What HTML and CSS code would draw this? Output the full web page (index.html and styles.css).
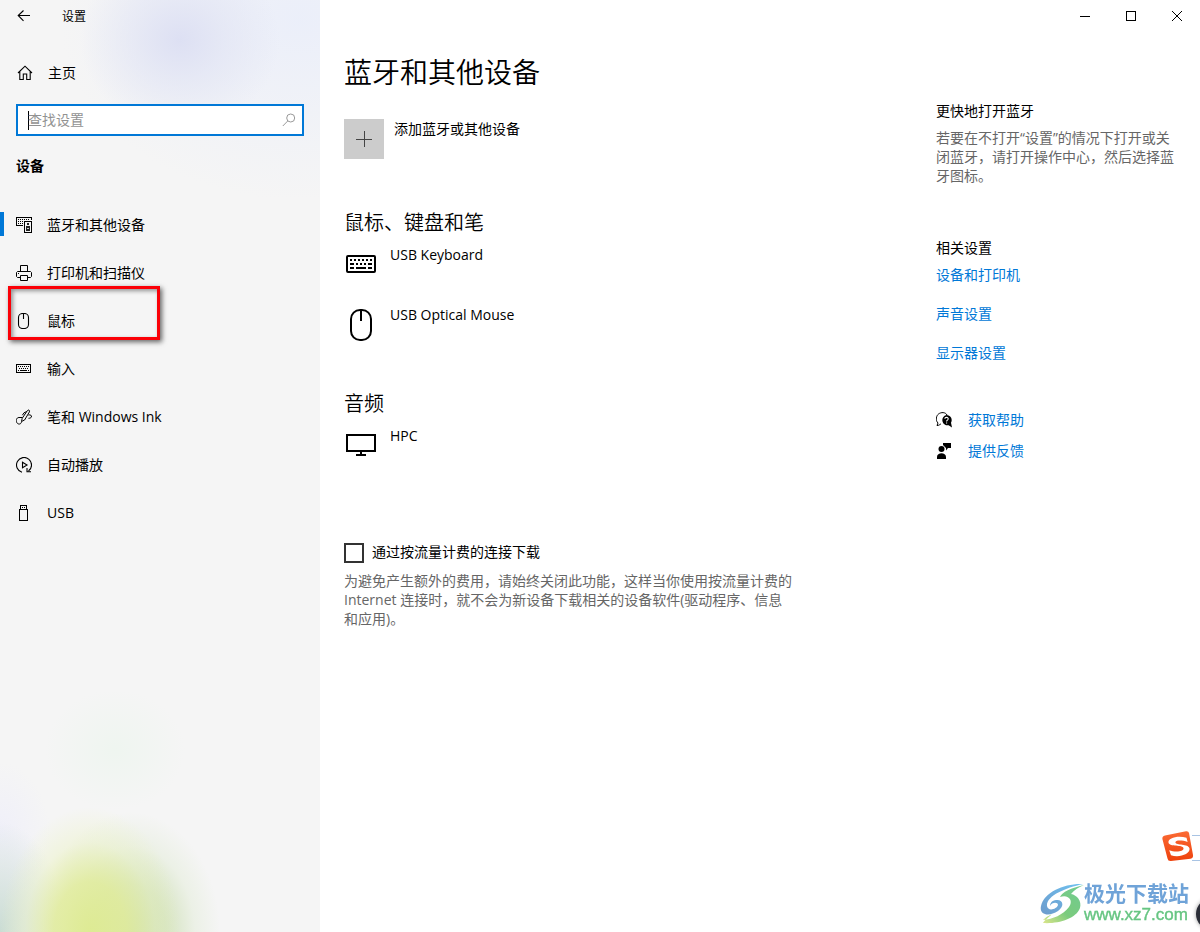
FILE: index.html
```html
<!DOCTYPE html>
<html lang="zh-CN">
<head>
<meta charset="utf-8">
<meta name="viewport" content="width=device-width, initial-scale=1">
<title>设置</title>
<link rel="stylesheet" href="styles.css">
</head>
<body>
<div class="window">
  <aside class="sidebar">
    <header class="app-bar">
      <button class="back" type="button" aria-label="返回">
        <svg width="14" height="12" viewBox="0 0 14 12" fill="none" stroke="#000" stroke-width="1.1"><path d="M1 5.5H13M6.5 .5L1.2 5.5L6.5 10.8"/></svg>
      </button>
      <span class="app-name">设置</span>
    </header>
    <a class="home" href="#home">
      <svg width="16" height="16" viewBox="0 0 16 16" fill="none" stroke="#000" stroke-width="1.1"><path d="M1 8L8 1.2L15 8M2.8 6.6V14.5H6.3V9H9.7V14.5H13.2V6.6"/></svg>
      <span>主页</span>
    </a>
    <div class="search">
      <span class="caret"></span>
      <input class="search-input" type="text" placeholder="查找设置" aria-label="查找设置">
      <svg width="14" height="14" viewBox="0 0 14 14" fill="none" stroke="#999" stroke-width="1"><circle cx="8.7" cy="5" r="4"/><path d="M5.8 7.9L.8 13"/></svg>
    </div>
    <h2 class="group-title">设备</h2>
    <nav class="nav">
      <a class="nav-item active" href="#bluetooth">
        <svg width="16" height="16" viewBox="0 0 16 16" fill="none" stroke="#000" shape-rendering="crispEdges"><path d="M7 8.500H.500V.500H15.500V3M8.500 4.500H15.500V15.500H8.500Z"/><path d="M2 2.500H14" stroke-dasharray="1 1"/><path d="M2 4.500H7M2 6.500H7" stroke-dasharray="1 1"/><path d="M11 6h2v2h-2zM10 9h4v5h-4z" fill="#222" stroke="none"/><path d="M11 11.500h2" stroke="#ccc"/></svg>
        <span>蓝牙和其他设备</span>
      </a>
      <a class="nav-item" href="#printers">
        <svg width="16" height="16" viewBox="0 0 16 16" fill="none" stroke="#000"><path d="M4.500 6.500V.500H11.500V6.500M4.500 12.500H1.500L.500 11.500V7.500L1.500 6.500H14.500L15.500 7.500V11.500L14.500 12.500H11.500M4.500 15.500V10.500H11.500V15.500Z"/><path d="M2 8.500h1"/></svg>
        <span>打印机和扫描仪</span>
      </a>
      <a class="nav-item" href="#mouse">
        <svg width="16" height="16" viewBox="0 0 16 16" fill="none" stroke="#000" stroke-width="1.1"><rect x="2.500" y=".500" width="10" height="15" rx="4"/><path d="M7.500 .500V6"/></svg>
        <span>鼠标</span>
        <i class="marker"></i>
      </a>
      <a class="nav-item" href="#typing">
        <svg width="16" height="16" viewBox="0 0 16 16" fill="none" stroke="#000" shape-rendering="crispEdges"><rect x=".500" y="3.500" width="14" height="8"/><path d="M2 5.500H14M3 7.500H13" stroke-dasharray="1 1"/><path d="M2 9.500h1M4 9.500h7M12 9.500h1"/></svg>
        <span>输入</span>
      </a>
      <a class="nav-item" href="#pen">
        <svg width="16" height="16" viewBox="0 0 16 16" fill="none" stroke="#000"><path d="M5.500 12.500L6.200 9.300L11.300 1.700C12.300 .200 14.200 1.300 13.400 2.900L8.600 11L5.500 12.500ZM10.700 2.500L8 3.800L6.400 6.200M6.300 8.500H3C.200 8.500-.200 12 .800 13.600C2.300 16 5.300 15.200 5.500 12.800M12.300 6C14.500 5.500 16 6.500 15.400 8C15 9 13.700 9.300 12.500 9.300"/></svg>
        <span>笔和 Windows Ink</span>
      </a>
      <a class="nav-item" href="#autoplay">
        <svg width="16" height="16" viewBox="0 0 16 16" fill="none" stroke="#000" stroke-width="1.1"><path d="M6 15.200A7.500 7.500 0 1 1 12.500 14M11 11V14.700H15"/><path d="M6.500 5.300V10.700L11 8Z"/></svg>
        <span>自动播放</span>
      </a>
      <a class="nav-item" href="#usb">
        <svg width="16" height="16" viewBox="0 0 16 16" fill="none" stroke="#000" shape-rendering="crispEdges"><path d="M4.500 4V.500H10.500V4M3.500 4.500H11.500V15.500H3.500Z"/><path d="M6 2.500h1M8 2.500h1"/></svg>
        <span>USB</span>
      </a>
    </nav>
  </aside>

  <div class="main">
    <div class="window-controls">
      <button type="button" aria-label="最小化"><svg width="10" height="10" viewBox="0 0 10 10" stroke="#000" fill="none"><path d="M0 5.500H10"/></svg></button>
      <button type="button" aria-label="最大化"><svg width="10" height="10" viewBox="0 0 10 10" stroke="#000" fill="none"><rect x=".500" y=".500" width="9" height="9"/></svg></button>
      <button type="button" aria-label="关闭"><svg width="10" height="10" viewBox="0 0 10 10" stroke="#000" fill="none"><path d="M0 0L10 10M10 0L0 10"/></svg></button>
    </div>
    <div class="content">
      <main class="settings">
        <h1 class="page-title">蓝牙和其他设备</h1>
        <button class="add" type="button">
          <span class="plus"><svg width="16" height="16" viewBox="0 0 16 16" stroke="#444" fill="none"><path d="M0 8.500H16M8.500 0V16"/></svg></span>
          <span>添加蓝牙或其他设备</span>
        </button>
        <section class="devices">
          <h2 class="section-title">鼠标、键盘和笔</h2>
          <div class="device">
            <svg width="32" height="38" viewBox="0 0 32 38" fill="none" stroke="#000" stroke-width="2"><rect x="2" y="11" width="28" height="16" rx="1"/><path d="M5 15H28" stroke-dasharray="2 2"/><path d="M5 19h4M11 19h2M15 19h2M19 19h2M23 19h4M5 23h4M11 23h10M23 23h4"/></svg>
            <span>USB Keyboard</span>
          </div>
          <div class="device">
            <svg width="32" height="38" viewBox="0 0 32 38" fill="none" stroke="#000" stroke-width="2"><rect x="6" y="5" width="20" height="30" rx="9"/><path d="M16 5V16"/></svg>
            <span>USB Optical Mouse</span>
          </div>
        </section>
        <section class="devices">
          <h2 class="section-title">音频</h2>
          <div class="device">
            <svg width="32" height="38" viewBox="0 0 32 38" fill="none" stroke="#000" stroke-width="2"><path d="M2 9H30V25H2ZM16 25V29M11 29H21"/></svg>
            <span>HPC</span>
          </div>
        </section>
        <section class="metered">
          <label class="check"><input type="checkbox"><span>通过按流量计费的连接下载</span></label>
          <p class="hint">为避免产生额外的费用，请始终关闭此功能，这样当你使用按流量计费的 Internet 连接时，就不会为新设备下载相关的设备软件(驱动程序、信息和应用)。</p>
        </section>
      </main>
      <aside class="related">
        <h3 class="side-title">更快地打开蓝牙</h3>
        <p class="hint">若要在不打开“设置”的情况下打开或关闭蓝牙，请打开操作中心，然后选择蓝牙图标。</p>
        <h3 class="side-title">相关设置</h3>
        <ul class="links">
          <li><a href="#devices">设备和打印机</a></li>
          <li><a href="#sound">声音设置</a></li>
          <li><a href="#display">显示器设置</a></li>
        </ul>
        <div class="support">
          <a href="#help">
            <svg width="16" height="16" viewBox="0 0 16 16"><path d="M5 11.800C4 12.500 2.800 13.500 1 13.500L2 11C-1 8 .500 3.500 2.500 2C5 0 9.500 0 11 3" fill="none" stroke="#000"/><path d="M10.500 3a5.200 5.200 0 0 1 4.500 7.800L16 15.500L12.600 13.200A5.200 5.200 0 1 1 10.500 3Z"/><path d="M8.800 6.800C9 4.700 12.500 5 12.200 7C12 8.200 10.600 8.200 10.600 9.500M10.600 10.500V11.600" fill="none" stroke="#fff" stroke-width="1.100"/></svg>
            <span>获取帮助</span>
          </a>
          <a href="#feedback">
            <svg width="16" height="16" viewBox="0 0 16 16"><circle cx="5.500" cy="6" r="3"/><path d="M1 16V14C1 9 10 9 10 14V16ZM7 0H15V5H12L10 7.500V5L8.500 3.500L7 2Z"/></svg>
            <span>提供反馈</span>
          </a>
        </div>
      </aside>
    </div>
  </div>
</div>

<div class="ime">
  <svg width="38" height="34" viewBox="0 0 38 34"><defs><linearGradient id="ime" x1="0" y1="0" x2="0" y2="1"><stop offset="0" stop-color="#fb6b35"/><stop offset="1" stop-color="#ee420d"/></linearGradient></defs><path d="M30 5.500H38M30 30.500H38" stroke="#a9c4e4" fill="none"/><path d="M3 5.500L24 1.200Q26.500 .800 27 3L31 25Q31.500 28 28.500 28.700L9 31Q6 31.300 5.500 28.500L.400 9Q0 6.300 3 5.500Z" fill="url(#ime)"/><path d="M24.500 7.800C16 5.200 5.500 8 6.500 12.800C7.500 17.200 21 14.500 21.500 18.200C22 22 12.500 22.300 7.200 20.200L9 25.200C16.500 28 28.500 24.500 27.500 18.600C26.600 13.400 14 15.800 13.400 12.600C13 10 20 10 25.600 12Z" fill="#fff"/></svg>
</div>
<div class="bubble"></div>
<div class="brand">
  <svg width="44" height="42" viewBox="0 0 44 42"><defs><linearGradient id="sky" x1="1" y1="0" x2="0" y2="1"><stop offset="0" stop-color="#6fc2f0"/><stop offset="1" stop-color="#6d9bcc"/></linearGradient><linearGradient id="leaf" x1="1" y1="0" x2="0" y2="1"><stop offset="0" stop-color="#6fcb93"/><stop offset=".600" stop-color="#7bcb7d"/><stop offset="1" stop-color="#dbe68b"/></linearGradient></defs>
    <path d="M43 2C25 1 4 10 1 24C-1 33 9 35 18 29C25 24 23 17 16 18C12 18.500 10 21 10 24C12 20 18 20 18 23C17 27 8 30 7 24C6 14 25 6 43 2Z" fill="url(#sky)"/>
    <path d="M44 3C31 6 22 10 20 15C28 12 34 18 29 25C23 33 13 37 3 38C7 34 11 33 12 32C8 36 4 39 3 41C18 42 36 37 40 26C42 19 37 13 31 12C34 8 39 5 44 3Z" fill="url(#leaf)"/></svg>
  <div class="brand-text"><span class="brand-name">极光下载站</span><span class="brand-url">www.xz7.com</span></div>
</div>
</body>
</html>
```
FILE: styles.css
```css
* { box-sizing: border-box; }

body {
  margin: 0;
  background: #fff;
  color: #000;
  font: 14px/20px "Open Sans", "Noto Sans CJK SC", sans-serif;
  overflow-x: hidden;
}

h1, h2, h3, p, ul { margin: 0; padding: 0; font-size: 14px; font-weight: 400; }
ul { list-style: none; }
a { text-decoration: none; color: inherit; }
svg { display: block; flex: none; }
button { padding: 0; border: 0; background: none; font: inherit; color: inherit; }

.window {
  display: grid;
  grid-template-columns: 320px 1fr;
  min-height: 100vh;
}

.sidebar {
  background:
    radial-gradient(ellipse 90px 125px at 90px 100%, rgba(222, 235, 145, .95), rgba(225, 236, 155, .85) 40%, rgba(234, 242, 190, .4) 72%, rgba(240, 245, 215, 0)),
    radial-gradient(ellipse 90px 120px at 130px 100%, rgba(195, 216, 165, .95), rgba(205, 223, 180, .8) 40%, rgba(222, 234, 208, .4) 72%, rgba(238, 243, 234, 0)),
    radial-gradient(ellipse 65px 110px at 0 100%, rgba(200, 219, 210, .95), rgba(210, 224, 220, .7) 45%, rgba(225, 232, 235, 0)),
    radial-gradient(ellipse 50px 70px at 0 calc(100% - 100px), rgba(238, 238, 250, .8), rgba(242, 242, 250, 0)),
    radial-gradient(ellipse 70px 60px at 115px calc(100% - 182px), rgba(238, 245, 239, .9), rgba(243, 246, 243, 0)),
    radial-gradient(ellipse 100px 90px at 180px 40px, rgba(220, 223, 243, .95), rgba(225, 228, 244, .65) 45%, rgba(238, 240, 249, 0)),
    radial-gradient(ellipse 240px 180px at 300px 20px, rgba(234, 238, 250, .9), rgba(243, 245, 248, 0)),
    #f5f5f5;
}

.app-bar { display: flex; align-items: center; height: 32px; }
.back { display: grid; place-items: center; width: 48px; height: 32px; }
.app-name { padding: 2px 0 0 14px; font-size: 12px; }

.home { display: flex; align-items: center; gap: 15px; height: 48px; margin: 17px 0 7px; padding-left: 17px; }

.search {
  display: flex;
  align-items: center;
  height: 32px;
  margin: 0 16px;
  padding: 0 6px 0 10px;
  border: 2px solid #0078d7;
  background: #fff;
}
.caret { width: 1px; height: 19px; margin-right: -1px; background: #000; }
.search-input { flex: 1; min-width: 0; height: 20px; padding: 0; border: 0; outline: 0; background: none; font: inherit; }
.search-input::placeholder { color: #929292; opacity: 1; }

.group-title { margin: 20px 16px 25px; font-weight: 700; }

.nav-item { position: relative; display: flex; align-items: center; gap: 15px; height: 48px; padding-left: 16px; }
.active::before { content: ""; position: absolute; left: 0; top: 11px; width: 4px; height: 24px; background: #0078d7; }
.marker {
  position: absolute;
  left: 8px;
  top: -11px;
  width: 152px;
  height: 54px;
  border: 3px solid #fb0007;
  box-shadow: 2px 2px 5px rgba(0, 0, 0, .6), inset 2px 2px 4px rgba(0, 0, 0, .4);
}

.window-controls { display: flex; justify-content: flex-end; height: 32px; }
.window-controls button { display: grid; place-items: center; width: 46px; }

.content {
  display: grid;
  grid-template-columns: minmax(0, 1fr) 244px;
  gap: 24px;
  padding: 22px 20px 24px 24px;
}

.page-title { font-size: 28px; line-height: 36px; font-weight: 350; }
.add { display: flex; align-items: flex-start; gap: 10px; margin: 29px 0 50px; }
.plus { display: grid; place-items: center; width: 40px; height: 40px; background: #ccc; }

.devices { margin-bottom: 25px; }
.section-title { margin-bottom: 8px; font-size: 20px; line-height: 28px; font-weight: 350; }
.device { display: flex; align-items: flex-start; gap: 13px; height: 60px; padding-left: 1px; }

.metered { max-width: 448px; margin-top: 57px; }
.check { display: flex; gap: 8px; }
.check span { line-height: 18px; }
.check input { appearance: none; flex: none; width: 20px; height: 20px; margin: 0; border: 2px solid #333; }
.hint { margin-top: 8px; line-height: 19px; color: #666; }

.related { padding-top: 47px; }
.related .hint { margin: 7px 0 53px; }
.links { display: grid; gap: 19px; margin: 7px 0 47px; color: #0078d7; }
.support { display: grid; gap: 11px; color: #0078d7; }
.support a { display: flex; align-items: center; gap: 16px; }

.ime { position: fixed; right: 0; bottom: 68px; }
.bubble {
  position: fixed;
  right: -28px;
  bottom: 2px;
  width: 32px;
  height: 32px;
  border-radius: 50%;
  background: #2b2e38;
  box-shadow: 0 0 4px rgba(0, 0, 0, .4);
}
.brand { position: fixed; right: 11px; bottom: 8px; display: flex; }
.brand-text { display: flex; flex-direction: column; }
.brand-name { font: 700 21px/24px "Liberation Sans", "Noto Sans CJK SC", sans-serif; color: #6fa3d8; }
.brand-url { font: 17px/18px "Liberation Sans", sans-serif; color: #66c582; -webkit-text-stroke: 0.4px #66c582; }
```
